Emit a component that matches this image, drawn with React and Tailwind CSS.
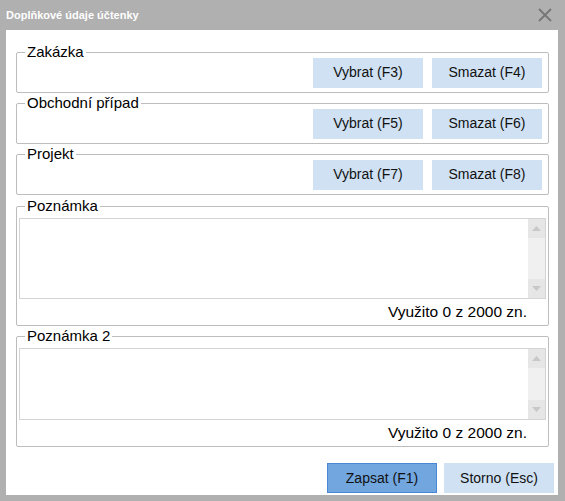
import React from 'react';

const font = { fontFamily: '"Liberation Sans", Arial, sans-serif' };

const Btn = ({ children, primary }) => (
  <button
    className={
      primary
        ? 'w-[110px] h-[30px] bg-[#72a6df] border border-[#4a88d4] text-[14px] text-[#111]'
        : 'w-[110px] h-[30px] bg-[#cfe1f3] border border-[#cfe1f3] text-[14px] text-[#111]'
    }
  >
    {children}
  </button>
);

const Group = ({ label, className, children }) => (
  <div className={`relative border border-[#bdbdbd] rounded-[2px] ${className}`}>
    <span className="absolute -top-[11px] left-[8px] bg-white px-[2px] text-[15px] leading-[20px] text-black">
      {label}
    </span>
    {children}
  </div>
);

const PickRow = ({ label, a, b }) => (
  <Group label={label} className="h-[41px] flex items-center justify-end gap-[9px] pr-[6px]">
    <Btn>{a}</Btn>
    <Btn>{b}</Btn>
  </Group>
);

const Arrow = ({ up }) => (
  <div className="h-[19px] bg-[#e6e6e6] flex items-center justify-center">
    <svg width="9" height="5" viewBox="0 0 9 5">
      <path d={up ? 'M0 5 L4.5 0 L9 5 Z' : 'M0 0 L4.5 5 L9 0 Z'} fill="#c8c8c8" />
    </svg>
  </div>
);

const Note = ({ label, h, className }) => (
  <Group label={label} className={`px-[2px] pt-[11px] ${className}`}>
    <div className="flex border border-[#d4d4d4]" style={{ height: h }}>
      <div className="flex-1" />
      <div className="w-[17px] bg-[#f0f0f0] flex flex-col justify-between">
        <Arrow up />
        <Arrow />
      </div>
    </div>
    <div className="h-[26px] flex items-center justify-end pr-[19px] text-[15.5px] text-black">
      Využito 0 z 2000 zn.
    </div>
  </Group>
);

export default function App() {
  return (
    <div className="w-[565px] h-[501px] bg-[#b0b0b0] flex flex-col" style={font}>
      <div className="h-[30px] flex items-center justify-between pl-[6px] pr-[13px]">
        <span className="text-white font-bold text-[11px]">Doplňkové údaje účtenky</span>
        <svg width="14" height="14" viewBox="0 0 14 14">
          <path d="M1 1 L13 13 M13 1 L1 13" stroke="#777" strokeWidth="2" />
        </svg>
      </div>
      <div className="flex-1 mx-[6px] mb-[6px] mr-[7px] bg-white pl-[10px] pr-[9px] pt-[22px] flex flex-col">
        <div className="flex flex-col gap-[10px]">
          <PickRow label="Zakázka" a="Vybrat (F3)" b="Smazat (F4)" />
          <PickRow label="Obchodní případ" a="Vybrat (F5)" b="Smazat (F6)" />
          <PickRow label="Projekt" a="Vybrat (F7)" b="Smazat (F8)" />
          <Note label="Poznámka" h={81} className="mt-[1px]" />
          <Note label="Poznámka 2" h={72} />
        </div>
        <div className="flex justify-end gap-[7px] mt-[16px] mr-[-5px]">
          <Btn primary>Zapsat (F1)</Btn>
          <Btn>Storno (Esc)</Btn>
        </div>
      </div>
    </div>
  );
}
